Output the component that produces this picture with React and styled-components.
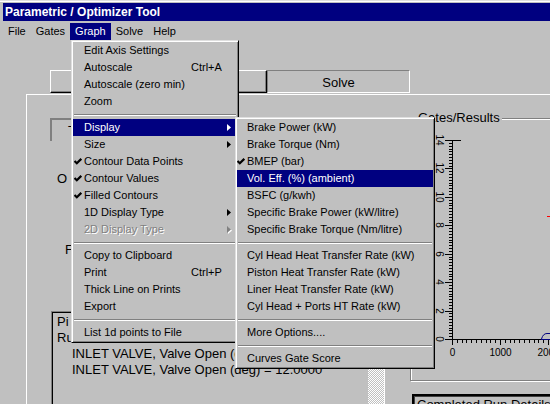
import styled, { createGlobalStyle } from "styled-components"

const GlobalStyle = createGlobalStyle`
  *, *::before, *::after { box-sizing: border-box; }
  html, body { margin: 0; padding: 0; background: #c0c0c0; overflow: hidden; }
  body { font-family: "Liberation Sans", Arial, sans-serif; color: #000; }
`

const Window = styled.div`
  position: relative;
  width: 550px;
  height: 404px;
  overflow: hidden;
  background: #c0c0c0;
  padding-top: 3px;
  box-shadow: inset 0 1px 0 #dfdfdf, inset 0 2px 0 #fff;
`

const TitleBar = styled.div`
  margin-left: 3px;
  height: 18px;
  padding-left: 2px;
  background: #000080;
  color: #fff;
  font-size: 12px;
  font-weight: bold;
  line-height: 18px;
  white-space: nowrap;
`

const MenuBar = styled.div`
  display: flex;
  height: 20px;
  padding: 2px 0 0 3px;
  font-size: 11px;
`

const MenuTitle = styled.div`
  height: 17px;
  padding: 0 5px;
  line-height: 17px;
  background: ${({ $open }) => ($open ? "#000080" : "transparent")};
  color: ${({ $open }) => ($open ? "#fff" : "#000")};
`

const TabRow = styled.div`
  display: flex;
  margin: 29px 0 0 50px;
`

const TabButton = styled.div`
  display: flex;
  align-items: center;
  justify-content: center;
  width: ${({ $w }) => $w}px;
  height: 23px;
  font-size: 13px;
  border: 1px solid;
  ${({ $down }) =>
    $down
      ? `border-color: #808080 #fff #fff #808080; padding-top: 2px;`
      : `border-color: #fff #000 #000 #fff; box-shadow: inset -1px -1px 0 #808080;`}
`

const MainPanel = styled.div`
  display: flex;
  width: 600px;
  height: 400px;
  margin: 1px 0 0 26px;
  border-top: 1px solid #fff;
  border-left: 1px solid #fff;
`

const LeftCol = styled.div`
  display: flex;
  flex-direction: column;
  align-items: flex-start;
  flex-shrink: 0;
  width: 358px;

  & > * { flex-shrink: 0; }
`

const FieldBox = styled.div`
  width: 180px;
  height: 23px;
  margin: 23px 0 0 23px;
  padding-left: 16px;
  border-top: 2px solid #808080;
  border-left: 2px solid #808080;
  font-size: 13px;
  line-height: 21px;
  white-space: nowrap;
`

const FieldLabel = styled.div`
  margin: ${({ $top }) => $top}px 0 0 ${({ $left }) => $left}px;
  font-size: 13px;
  line-height: 16px;
  white-space: nowrap;
`

const ListBox = styled.div`
  display: flex;
  width: 334px;
  height: 140px;
  margin: 53px 0 0 24px;
  border: 1px solid;
  border-color: #808080 #fff #fff #808080;
  box-shadow: inset 1px 1px 0 #000, inset -1px -1px 0 #dfdfdf;
  padding: 1px 0 0 1px;
`

const ListLines = styled.div`
  flex: 1;
  padding: 1px 0 0 4px;
  font-size: 13px;
  line-height: 16px;
  overflow: hidden;
`

const ListLine = styled.div`
  padding-left: ${({ $indent }) => $indent || 0}px;
  white-space: pre;
`

const ScrollTrack = styled.div`
  width: 16px;
  margin-bottom: 1px;
  background: repeating-conic-gradient(#fff 0 25%, #c0c0c0 0 50%) 0 0 / 2px 2px;
`

const RightCol = styled.div`
  display: flex;
  flex-direction: column;
  align-items: flex-start;
  flex-shrink: 0;
  margin-left: 25px;
  padding-top: 23px;

  & > * { flex-shrink: 0; }
`

const GroupBox = styled.div`
  position: relative;
  width: 200px;
  height: 263px;
  padding: 1px 0 0 1px;
  border: 1px solid #808080;
  box-shadow: inset 1px 1px 0 #fff, 1px 1px 0 #fff;
`

const GroupLabel = styled.span`
  position: absolute;
  top: -9px;
  left: 5px;
  padding: 0 2px;
  background: #c0c0c0;
  font-size: 13px;
  line-height: 16px;
  white-space: nowrap;
`

const RunBox = styled.div`
  width: 200px;
  height: 30px;
  margin: 13px 0 0 2px;
  padding: 1px 0 0 3px;
  border-top: 2px solid #000;
  border-left: 2px solid #000;
  box-shadow: inset 1px 1px 0 #404040;
  font-size: 13px;
  line-height: 16px;
  white-space: nowrap;
`

const Popup = styled.div`
  position: absolute;
  left: ${({ $x }) => $x}px;
  top: ${({ $y }) => $y}px;
  width: ${({ $w }) => $w}px;
  padding: 1px;
  background: #c0c0c0;
  border: 1px solid;
  border-color: #dfdfdf #000 #000 #dfdfdf;
  box-shadow: inset 1px 1px 0 #fff, inset -1px -1px 0 #808080;
  font-size: 11px;
`

const Item = styled.div`
  display: grid;
  grid-template-columns: ${({ $gutter }) => $gutter}px minmax(0, 1fr) 46px;
  align-items: center;
  height: 17px;
  line-height: 17px;
  white-space: nowrap;
  background: ${({ $active }) => ($active ? "#000080" : "transparent")};
  color: ${({ $active, $disabled }) => ($active ? "#fff" : $disabled ? "#808080" : "#000")};
  text-shadow: ${({ $disabled }) => ($disabled ? "1px 1px 0 #fff" : "none")};
`

const CheckCell = styled.span`
  display: flex;
  align-items: center;
  padding-left: ${({ $pad }) => $pad}px;
`

const Arrow = styled.svg`
  justify-self: end;
  margin-right: 6px;
  filter: ${({ $disabled }) => ($disabled ? "drop-shadow(1px 1px 0 #fff)" : "none")};
`

const Separator = styled.div`
  height: 9px;
  padding: 4px 1px 0;

  &::before {
    content: "";
    display: block;
    border-top: 1px solid #808080;
    border-bottom: 1px solid #fff;
  }
`

const graphItems = [
  { label: "Edit Axis Settings" },
  { label: "Autoscale", shortcut: "Ctrl+A" },
  { label: "Autoscale (zero min)" },
  { label: "Zoom" },
  { sep: true },
  { label: "Display", sub: true, active: true },
  { label: "Size", sub: true },
  { label: "Contour Data Points", checked: true },
  { label: "Contour Values", checked: true },
  { label: "Filled Contours", checked: true },
  { label: "1D Display Type", sub: true },
  { label: "2D Display Type", sub: true, disabled: true },
  { sep: true },
  { label: "Copy to Clipboard" },
  { label: "Print", shortcut: "Ctrl+P" },
  { label: "Thick Line on Prints" },
  { label: "Export" },
  { sep: true },
  { label: "List 1d points to File" },
]

const displayItems = [
  { label: "Brake Power (kW)" },
  { label: "Brake Torque (Nm)" },
  { label: "BMEP (bar)", checked: true },
  { label: "Vol. Eff. (%) (ambient)", active: true },
  { label: "BSFC (g/kwh)" },
  { label: "Specific Brake Power (kW/litre)" },
  { label: "Specific Brake Torque (Nm/litre)" },
  { sep: true },
  { label: "Cyl Head Heat Transfer Rate (kW)" },
  { label: "Piston Heat Transfer Rate (kW)" },
  { label: "Liner Heat Transfer Rate (kW)" },
  { label: "Cyl Head + Ports HT Rate (kW)" },
  { sep: true },
  { label: "More Options...." },
  { sep: true },
  { label: "Curves Gate Score" },
]

const Check = () => (
  <svg width="8" height="7" viewBox="0 0 8 7">
    <path d="M0.5 3 L2.8 5.3 L7.3 0.8" fill="none" stroke="currentColor" strokeWidth="2.2" />
  </svg>
)

const Menu = ({ items, x, y, w, gutter, checkPad }) => (
  <Popup $x={x} $y={y} $w={w}>
    {items.map((it, i) =>
      it.sep ? (
        <Separator key={i} />
      ) : (
        <Item key={i} $gutter={gutter} $active={it.active} $disabled={it.disabled}>
          <CheckCell $pad={checkPad}>{it.checked && <Check />}</CheckCell>
          <span>{it.label}</span>
          {it.shortcut && <span>{it.shortcut}</span>}
          {it.sub && (
            <Arrow $disabled={it.disabled} width="4" height="7" viewBox="0 0 4 7">
              <path d="M0 0 L4 3.5 L0 7 Z" fill="currentColor" />
            </Arrow>
          )}
        </Item>
      )
    )}
  </Popup>
)

// chart drawn in page coordinates through the viewBox
const Chart = () => {
  const yTicks = []
  for (let i = 0; i <= 70; i++) {
    const y = Math.round(339 - (i * 199) / 70) + 0.5
    const major = i % 10 === 0
    yTicks.push(
      <line key={"y" + i} x1={major ? 445 : 449} x2={i === 70 ? 461 : 453} y1={y} y2={y} />
    )
  }
  const xTicks = []
  for (let j = 0; j <= 21; j++) {
    const x = Math.round(452 + j * 4.8) + 0.5
    xTicks.push(<line key={"x" + j} x1={x} x2={x} y1={340} y2={j % 10 === 0 ? 345 : 343} />)
  }
  const yLabels = [0, 2, 4, 6, 8, 10, 12, 14]
  return (
    <svg width="138" height="250" viewBox="412 120 138 250" style={{ display: "block" }}>
      <g stroke="#000" strokeWidth="1" shapeRendering="crispEdges">
        <line x1={452.5} x2={452.5} y1={140} y2={340} />
        <line x1={445} x2={552} y1={339.5} y2={339.5} />
        {yTicks}
        {xTicks}
      </g>
      <g fontFamily="Liberation Sans, Arial, sans-serif" fontSize="10" fill="#000">
        {yLabels.map((v) => (
          <text
            key={v}
            transform={`translate(439.5 ${Math.round(339 - (v * 199) / 14)}) rotate(90)`}
            textAnchor="middle"
            dominantBaseline="central"
          >
            {v}
          </text>
        ))}
        <text x="452.5" y="356" textAnchor="middle">0</text>
        <text x="500.5" y="356" textAnchor="middle">1000</text>
        <text x="548.5" y="356" textAnchor="middle">2000</text>
      </g>
      <path d="M541 339.5 L552 339.5 M541.5 339 Q543 333.5 547 333.5 L552 333.5" fill="none" stroke="#000080" />
      <line x1="547" x2="552" y1="216.5" y2="216.5" stroke="#ff0000" />
    </svg>
  )
}

const App = () => {
  return (
    <Window>
      <GlobalStyle />
      <TitleBar>Parametric / Optimizer Tool</TitleBar>
      <MenuBar>
        <MenuTitle>File</MenuTitle>
        <MenuTitle>Gates</MenuTitle>
        <MenuTitle $open>Graph</MenuTitle>
        <MenuTitle>Solve</MenuTitle>
        <MenuTitle>Help</MenuTitle>
      </MenuBar>

      <TabRow>
        <TabButton $w={217}>Setup</TabButton>
        <TabButton $w={143} $down>Solve</TabButton>
      </TabRow>

      <MainPanel>
        <LeftCol>
          <FieldBox>Target Variable</FieldBox>
          <FieldLabel $top={30} $left={30}>O Objective</FieldLabel>
          <FieldLabel $top={55} $left={38}>F Function</FieldLabel>
          <ListBox>
            <ListLines>
              <ListLine>Pi Parametric Inputs</ListLine>
              <ListLine>Run 1 of 5</ListLine>
              <ListLine $indent={15}>INLET VALVE, Valve Open (deg) = 8.0000</ListLine>
              <ListLine $indent={15}>INLET VALVE, Valve Open (deg) = 12.0000</ListLine>
            </ListLines>
            <ScrollTrack />
          </ListBox>
        </LeftCol>

        <RightCol>
          <GroupBox>
            <GroupLabel>Gates/Results</GroupLabel>
            <Chart />
          </GroupBox>
          <RunBox>Completed Run Details</RunBox>
        </RightCol>
      </MainPanel>

      <Menu items={graphItems} x={71} y={40} w={168} gutter={11} checkPad={1} />
      <Menu items={displayItems} x={235} y={117} w={200} gutter={10} checkPad={0} />
    </Window>
  )
}

export default App
